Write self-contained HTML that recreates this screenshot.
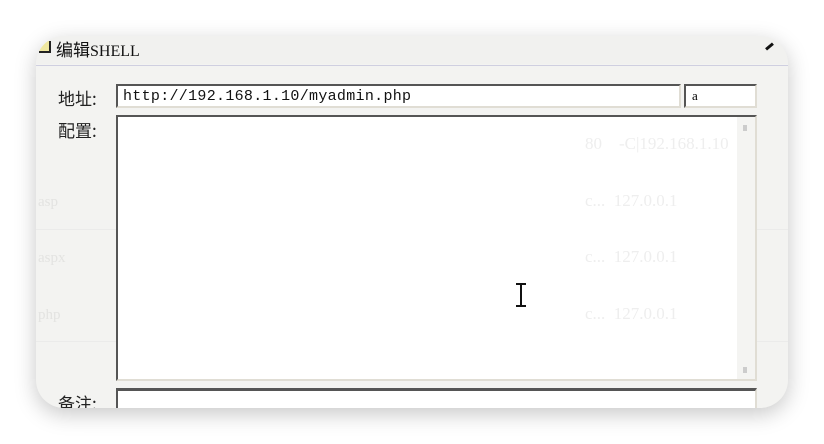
<!DOCTYPE html>
<html><head><meta charset="utf-8"><style>
body{margin:0;width:824px;height:444px;background:#fff;position:relative;overflow:hidden;font-family:"Liberation Serif","Noto Serif CJK SC",serif}
.card{position:absolute;left:36px;top:36px;width:752px;height:372px;border-radius:28px;background:#f3f3f1;box-shadow:0 6px 22px rgba(0,0,0,.22);overflow:hidden}
.a{position:absolute}
.g{position:absolute;color:#e3e3e1;font-size:15px;font-family:"Liberation Serif",serif}
.lbl{position:absolute;font-size:17px;color:#222;font-family:"Noto Sans CJK SC",sans-serif}
.in{position:absolute;background:#fff;border:2px solid;border-color:#555 #e0ddd4 #e0ddd4 #555;box-sizing:border-box}
</style></head><body>
<div class="card">
<div class="a" style="left:0;top:0;width:752px;height:28px;background:#f1f1ef"></div>
<div class="a" style="left:0;top:29px;width:752px;height:1px;background:#cfcfe0"></div>
<div class="a" style="left:3px;top:5px;width:10px;height:10px;border-right:2px solid #222;border-bottom:2px solid #222;background:#f0e8a0"></div>
<div class="a" style="left:20px;top:0px;font-size:17px;color:#111;font-family:'Noto Sans CJK SC',sans-serif">编辑<span style="font-family:'Liberation Serif';font-size:16px">SHELL</span></div>
<div class="a" style="left:732px;top:6px;width:3px;height:9px;background:#111;transform:rotate(50deg)"></div>
<div class="a" style="left:0;top:193px;width:752px;height:1px;background:#ebebea"></div>
<div class="a" style="left:0;top:305px;width:752px;height:1px;background:#ebebea"></div>
<div class="g" style="left:2px;top:158px">asp</div>
<div class="g" style="left:2px;top:214px">aspx</div>
<div class="g" style="left:2px;top:271px">php</div>
<div class="lbl" style="left:22px;top:49px">地址:</div>
<div class="lbl" style="left:22px;top:81px">配置:</div>
<div class="lbl" style="left:22px;top:354px">备注:</div>
<div class="in" style="left:80px;top:48px;width:565px;height:24px"><span style="position:absolute;left:5px;top:2px;font-size:15px;letter-spacing:0.3px;font-family:'Liberation Mono',monospace;color:#111">http://192.168.1.10/myadmin.php</span></div>
<div class="in" style="left:648px;top:48px;width:73px;height:24px"><span style="position:absolute;left:6px;top:2px;font-size:13px">a</span></div>
<div class="in" style="left:80px;top:79px;width:641px;height:266px">
<div class="a" style="right:0;top:0;width:18px;height:262px;background:#f4f4f2"></div>
<div class="a" style="right:8px;top:8px;width:4px;height:6px;background:#ccc"></div>
<div class="a" style="right:8px;bottom:6px;width:4px;height:6px;background:#ccc"></div>
<div class="g" style="left:467px;top:17px;font-size:17px;color:#eee">80 &nbsp;&nbsp;&nbsp;-C|192.168.1.10</div>
<div class="g" style="left:467px;top:74px;font-size:17px;color:#eee">c... &nbsp;127.0.0.1</div>
<div class="g" style="left:467px;top:130px;font-size:17px;color:#eee">c... &nbsp;127.0.0.1</div>
<div class="g" style="left:467px;top:187px;font-size:17px;color:#eee">c... &nbsp;127.0.0.1</div>
</div>
<div class="in" style="left:80px;top:352px;width:641px;height:30px;border-top-width:3px"></div>
<div class="a" style="left:484px;top:248px;width:2px;height:22px;background:#111"></div>
<div class="a" style="left:480px;top:247px;width:10px;height:2px;background:#111"></div>
<div class="a" style="left:480px;top:269px;width:10px;height:2px;background:#111"></div>
</div>
</body></html>
